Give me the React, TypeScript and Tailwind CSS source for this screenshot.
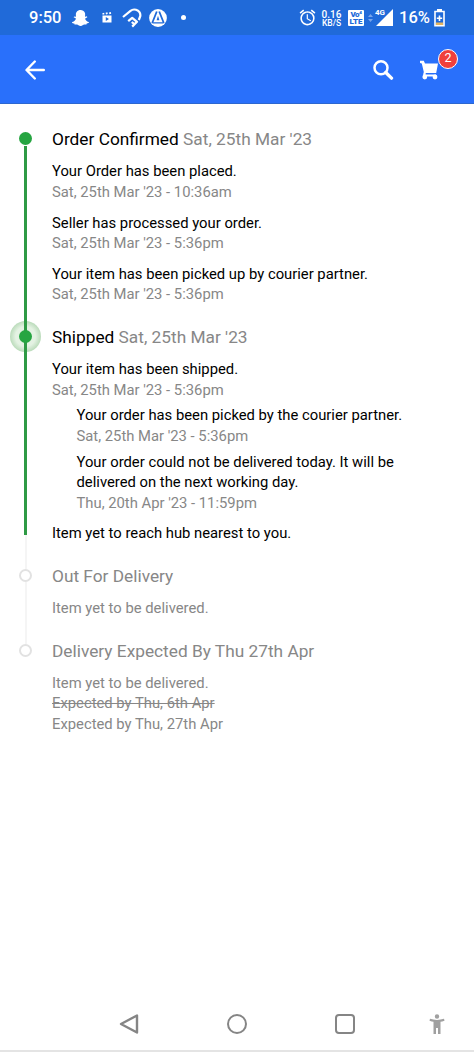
import { FaSnapchatGhost } from "react-icons/fa";
import { MdAlarm } from "react-icons/md";

interface TrackingEvent {
  text: string;
  time?: string;
  nested?: boolean;
}

interface Step {
  id: string;
  title: string;
  date?: string;
  status: "done" | "current" | "pending";
  events: TrackingEvent[];
}

const steps: Step[] = [
  {
    id: "confirmed",
    title: "Order Confirmed",
    date: "Sat, 25th Mar '23",
    status: "done",
    events: [
      { text: "Your Order has been placed.", time: "Sat, 25th Mar '23 - 10:36am" },
      { text: "Seller has processed your order.", time: "Sat, 25th Mar '23 - 5:36pm" },
      {
        text: "Your item has been picked up by courier partner.",
        time: "Sat, 25th Mar '23 - 5:36pm",
      },
    ],
  },
  {
    id: "shipped",
    title: "Shipped",
    date: "Sat, 25th Mar '23",
    status: "current",
    events: [
      { text: "Your item has been shipped.", time: "Sat, 25th Mar '23 - 5:36pm" },
      {
        text: "Your order has been picked by the courier partner.",
        time: "Sat, 25th Mar '23 - 5:36pm",
        nested: true,
      },
      {
        text: "Your order could not be delivered today. It will be delivered on the next working day.",
        time: "Thu, 20th Apr '23 - 11:59pm",
        nested: true,
      },
      { text: "Item yet to reach hub nearest to you." },
    ],
  },
  {
    id: "out",
    title: "Out For Delivery",
    status: "pending",
    events: [{ text: "Item yet to be delivered." }],
  },
  {
    id: "delivery",
    title: "Delivery Expected By Thu 27th Apr",
    status: "pending",
    events: [{ text: "Item yet to be delivered." }],
  },
];

const StatusBar = () => (
  <div className="flex h-[35px] shrink-0 items-center bg-[#206ad9] pl-[29px] text-white">
    <span className="w-[43px] pt-[2px] text-[16.5px] font-medium leading-none">9:50</span>
    <FaSnapchatGhost className="h-[18px] w-[17px]" />
    {/* clapper board */}
    <svg className="ml-[13px] h-[11px] w-[10px]" viewBox="0 0 10 11" fill="currentColor">
      <path d="M0.3 1.2l1.8-.5.4 1.6-1.8.5zM3.6.8l1.8-.5.4 1.6-1.8.5zM7 .6l1.8-.5.4 1.6-1.8.5z" />
      <path fillRule="evenodd" d="M.5 3.5h9V10.5h-9zM3.8 5v4l3.2-2z" />
    </svg>
    {/* handshake */}
    <svg
      className="ml-[10px] h-[20px] w-[20px]"
      viewBox="0 0 20 20"
      fill="none"
      stroke="currentColor"
      strokeWidth="2.2"
      strokeLinejoin="round"
    >
      <path d="M1 9L8.5 2.8Q11 .9 14 1.800Q18.800 3.500 18.300 8L16.800 12" />
      <path d="M6.2 13.200L10.200 9.800L15 13.800L10.200 18.600M12.500 16.300L9.800 14" />
    </svg>
    <svg className="ml-[7px] h-[18px] w-[18px]" viewBox="0 0 18 18">
      <circle cx="9" cy="9" r="8.9" fill="white" />
      <path
        d="M7.800 2.500L3.200 14M10.200 2.500L14.800 14"
        stroke="#206ad9"
        strokeWidth="1.8"
        fill="none"
      />
      <path d="M9 6.800L7.600 11.200H10.400zM3.500 13.200H14.500V14.400H3.500z" fill="#206ad9" />
    </svg>
    <span className="ml-[14px] h-[5px] w-[5px] rounded-full bg-white" />

    <div className="ml-auto flex items-center pr-[29px]">
      <MdAlarm className="h-[19px] w-[19px]" />
      <div className="ml-[4px] flex w-[21px] flex-col items-center whitespace-nowrap pt-px font-medium">
        <span className="text-[10px] leading-[9px]">0.16</span>
        <span className="text-[8.5px] leading-[8px]">KB/S</span>
      </div>
      <div className="ml-[6px] flex h-[16px] w-[16px] flex-col items-center justify-center rounded-[1px] bg-white text-[8px] font-black leading-[7px] text-[#206ad9]">
        <span className="tracking-[-0.5px]">Vo⁴</span>
        <span>LTE</span>
      </div>
      <svg className="ml-[4px] h-[8px] w-[5px]" viewBox="0 0 5 8" fill="#78a4ea">
        <path d="M2.5 0L5 3H0zM2.5 8L0 5H5z" />
      </svg>
      <div className="relative ml-[3px] h-[18px] w-[17px]">
        <svg className="h-[18px] w-[17px]" viewBox="0 0 17 18" fill="currentColor">
          <path d="M17 0V17H0z" />
        </svg>
        <span className="absolute left-[-1px] top-0 bg-[#206ad9] text-[8px] font-bold leading-[8px]">
          4G
        </span>
      </div>
      <span className="ml-[6px] w-[35px] pt-[2px] text-[16.5px] font-medium leading-none">
        16%
      </span>
      <svg className="h-[18px] w-[11px]" viewBox="0 0 11 18" fill="none">
        <path d="M3 0H8V2H3z" fill="white" />
        <path d="M1 2.5H10V16.8H1z" stroke="white" strokeWidth="1.6" />
        <path d="M2 13.5H9V16H2z" fill="#e5b45c" />
        <path d="M5.5 6.5V12M2.8 9.2H8.2" stroke="white" strokeWidth="1.6" />
      </svg>
    </div>
  </div>
);

const AppBar = () => (
  <header className="flex h-[69px] shrink-0 items-center border-b border-[#2c67cf] bg-[#2970fb] pl-[25px] pr-[16px] pt-px text-white">
    <svg
      className="h-[20px] w-[20px]"
      viewBox="0 0 20 20"
      fill="none"
      stroke="currentColor"
      strokeWidth="2.4"
      strokeLinecap="round"
      strokeLinejoin="round"
    >
      <path d="M1.8 10H18.8M9.8 1.5L1.5 10L9.8 18.5" />
    </svg>
    <svg
      className="ml-auto h-[20px] w-[21px]"
      viewBox="0 0 21 20"
      fill="none"
      stroke="currentColor"
    >
      <circle cx="8" cy="7.8" r="6.5" strokeWidth="2.5" />
      <path d="M12.8 12.5L18.5 18.2" strokeWidth="3.3" strokeLinecap="round" />
    </svg>
    <div className="relative ml-[26px] w-[38px]">
      <svg className="h-[20px] w-[20px]" viewBox="0 0 20 20" fill="currentColor">
        <path d="M0 .8H3.8L5 3.5H18L16.2 13H5.8L5.5 14.500H16V16.500H4Q2.800 15.800 3.200 14.300L3.800 12L1.800 3.500L0 3z" />
        <circle cx="4.8" cy="17" r="2.4" />
        <circle cx="15" cy="17" r="2.4" />
      </svg>
      <span className="absolute left-[18px] top-[-11px] flex h-[20px] w-[20px] items-center justify-center rounded-full border-[1.5px] border-white bg-[#f0403c] text-[12.5px] leading-none">
        2
      </span>
    </div>
  </header>
);

const Rail = ({ status, last }: { status: Step["status"]; last: boolean }) => {
  if (status === "done") {
    return (
      <div className="mr-px flex w-[51px] shrink-0 flex-col items-center pt-[5px]">
        <span className="h-[13px] w-[13px] rounded-full bg-[#26a541]" />
        <span className="mt-px w-[3px] flex-1 bg-[#2f9a45]" />
      </div>
    );
  }

  if (status === "current") {
    return (
      <div className="relative mr-px flex w-[51px] shrink-0 flex-col items-center">
        <span className="absolute top-[-4px] h-[31px] w-[31px] rounded-full bg-[radial-gradient(circle,#e4f2e3_45%,#bcdcbc_70%)]" />
        <span className="relative -mt-[5px] w-[3px] flex-1 bg-[#2f9a45]" />
        <span className="absolute top-[5px] h-[13px] w-[13px] rounded-full bg-[#26a541]" />
        <span className="h-[29px] w-[2px] bg-[#f5f5f5]" />
      </div>
    );
  }

  return (
    <div className="mr-px flex w-[51px] shrink-0 flex-col items-center">
      <span className="h-[5px] w-[2px] bg-[#f5f5f5]" />
      <span className="h-[13px] w-[13px] rounded-full border-2 border-[#e2e2e2]" />
      {!last && <span className="w-[2px] flex-1 bg-[#f5f5f5]" />}
    </div>
  );
};

const StepRow = ({ step, last }: { step: Step; last: boolean }) => {
  const pending = step.status === "pending";

  return (
    <li className="flex">
      <Rail status={step.status} last={last} />
      <div className="flex-1 pb-[20px] pr-[52px]">
        <h2
          className={`text-[17.3px] leading-[24px] ${pending ? "text-[#878787]" : "text-black"}`}
        >
          {step.title}
          {step.date && <span className="text-[#878787]"> {step.date}</span>}
        </h2>
        {step.events.map((event, idx) => (
          <div
            key={idx}
            className={`text-[14.8px] leading-[20.6px] ${
              event.nested ? "ml-[24.5px] mt-[5.2px]" : "mt-[10px]"
            } ${pending ? "text-[#878787]" : "text-black"}`}
          >
            <p>{event.text}</p>
            {event.time && <p className="text-[#878787]">{event.time}</p>}
          </div>
        ))}
        {last && (
          <div className="text-[14.8px] leading-[20.6px] text-[#878787]">
            <p className="line-through">Expected by Thu, 6th Apr</p>
            <p>Expected by Thu, 27th Apr</p>
          </div>
        )}
      </div>
    </li>
  );
};

const NavBar = () => (
  <nav className="flex h-[56px] shrink-0 items-center border-b-2 border-[#e4e4e4] pl-[119px] pt-px text-[#858585]">
    <svg className="h-[20px] w-[20px]" viewBox="0 0 20 20" fill="none" stroke="currentColor">
      <path d="M18 1.5V18.5L2 10z" strokeWidth="2.4" strokeLinejoin="round" />
    </svg>
    <span className="ml-[88px] h-[20px] w-[20px] rounded-full border-[2.5px] border-current" />
    <span className="ml-[88px] h-[20px] w-[20px] rounded-[4px] border-[2.5px] border-current" />
    {/* accessibility */}
    <svg
      className="ml-[74px] h-[20px] w-[16px] text-[#a0a0a0]"
      viewBox="0 0 16 20"
      fill="currentColor"
    >
      <circle cx="8" cy="2.5" r="2.2" />
      <path d="M1 4.8Q8 7 15 4.8L15.5 6.8Q13 7.6 11.500 7.8V20H9V14H7V20H4.500V7.8Q3 7.6 .5 6.8z" />
    </svg>
  </nav>
);

export default function App() {
  return (
    <div className="flex h-screen w-full flex-col overflow-hidden bg-white font-['Roboto',sans-serif]">
      <StatusBar />
      <AppBar />
      <main className="flex-1 pt-[23.4px]">
        <ul>
          {steps.map((step, idx) => (
            <StepRow key={step.id} step={step} last={idx === steps.length - 1} />
          ))}
        </ul>
      </main>
      <NavBar />
    </div>
  );
}
